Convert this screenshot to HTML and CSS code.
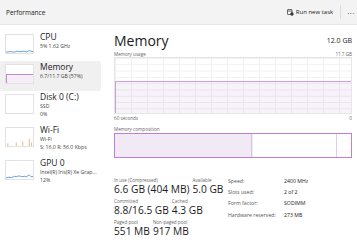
FILE: index.html
```html
<!DOCTYPE html>
<html lang="en">
<head>
<meta charset="UTF-8">
<title>Performance - Memory</title>
<link rel="stylesheet" href="styles.css">
</head>
<body>
<div class="topbar">
    <span class="app-title">Performance</span>
    <div class="top-actions">
        <span class="run-task">
            <svg width="7" height="7" viewBox="0 0 14 14">
                <rect x="1" y="1" width="9" height="10" rx="1" fill="none" stroke="#333" stroke-width="1.4"/>
                <line x1="1" y1="4" x2="10" y2="4" stroke="#333" stroke-width="1.4"/>
                <circle cx="10" cy="10" r="3.3" fill="#333"/>
            </svg>
            Run new task
        </span>
        <span class="sep"></span>
        <span class="more">&middot;&middot;&middot;</span>
    </div>
</div>

<div class="layout">
    <div class="sidebar">
        <div class="item">
            <div class="thumb">
                <svg viewBox="0 0 29 20" preserveAspectRatio="none">
                    <polyline points="0,19 5,18.5 9,19 12,18 15,18.6 19,18 22,18.8 25,17.5 29,18.5" fill="none" stroke="#2f7fd0" stroke-width="0.8"/>
                </svg>
            </div>
            <div class="info">
                <div class="name">CPU</div>
                <div class="sub">5% 1.62 GHz</div>
            </div>
        </div>
        <div class="item active">
            <div class="thumb">
                <div class="mem-fill"></div>
            </div>
            <div class="info">
                <div class="name">Memory</div>
                <div class="sub">6.7/11.7 GB (57%)</div>
            </div>
        </div>
        <div class="item">
            <div class="thumb"></div>
            <div class="info">
                <div class="name">Disk 0 (C:)</div>
                <div class="sub">SSD</div>
                <div class="sub">0%</div>
            </div>
        </div>
        <div class="item">
            <div class="thumb">
                <svg viewBox="0 0 29 20" preserveAspectRatio="none">
                    <g stroke="#e0a060" stroke-width="0.8">
                        <line x1="2" y1="20" x2="2" y2="17"/>
                        <line x1="11" y1="20" x2="11" y2="16"/>
                        <line x1="18" y1="20" x2="18" y2="15"/>
                        <line x1="25" y1="20" x2="25" y2="12"/>
                        <line x1="27.5" y1="20" x2="27.5" y2="16"/>
                    </g>
                </svg>
            </div>
            <div class="info">
                <div class="name">Wi-Fi</div>
                <div class="sub">Wi-Fi</div>
                <div class="sub">S: 16.0 R: 56.0 Kbps</div>
            </div>
        </div>
        <div class="item">
            <div class="thumb">
                <svg viewBox="0 0 29 20" preserveAspectRatio="none">
                    <polyline points="0,19 3,18 6,18.5 9,17 11,17.5 14,16.5 17,17.5 20,17 22,17.5 25,15.5 27,17.5 29,17" fill="none" stroke="#2f7fd0" stroke-width="0.8"/>
                </svg>
            </div>
            <div class="info">
                <div class="name">GPU 0</div>
                <div class="sub">Intel(R) Iris(R) Xe Grap...</div>
                <div class="sub">12%</div>
            </div>
        </div>
    </div>

    <div class="main">
        <div class="heading">
            <h1>Memory</h1>
            <span class="total">12.0 GB</span>
        </div>
        <div class="caption">
            <span>Memory usage</span>
            <span>11.7 GB</span>
        </div>
        <div class="graph">
            <div class="usage" style="height: 58%"></div>
        </div>
        <div class="caption">
            <span>60 seconds</span>
            <span>0</span>
        </div>
        <div class="caption comp-label">
            <span>Memory composition</span>
        </div>
        <div class="comp-bar">
            <div class="seg in-use" style="width: 57.5%"></div>
            <div class="seg modified"></div>
            <div class="seg standby"></div>
            <div class="seg free"></div>
        </div>

        <div class="details">
            <div class="stats">
                <div class="stat-row">
                    <div class="stat">
                        <div class="label">In use (Compressed)</div>
                        <div class="value">6.6 GB (404 MB)</div>
                    </div>
                    <div class="stat">
                        <div class="label">Available</div>
                        <div class="value">5.0 GB</div>
                    </div>
                </div>
                <div class="stat-row">
                    <div class="stat">
                        <div class="label">Committed</div>
                        <div class="value">8.8/16.5 GB</div>
                    </div>
                    <div class="stat">
                        <div class="label">Cached</div>
                        <div class="value">4.3 GB</div>
                    </div>
                </div>
                <div class="stat-row">
                    <div class="stat">
                        <div class="label">Paged pool</div>
                        <div class="value">551 MB</div>
                    </div>
                    <div class="stat">
                        <div class="label">Non-paged pool</div>
                        <div class="value">917 MB</div>
                    </div>
                </div>
            </div>
            <div class="props">
                <span class="key">Speed:</span><span>2400 MHz</span>
                <span class="key">Slots used:</span><span>2 of 2</span>
                <span class="key">Form factor:</span><span>SODIMM</span>
                <span class="key">Hardware reserved:</span><span>273 MB</span>
            </div>
        </div>
    </div>
</div>
</body>
</html>
```

FILE: styles.css
```css
* {
    margin: 0;
    padding: 0;
    box-sizing: border-box;
}
body {
    font-family: "Open Sans", "Noto Sans", sans-serif;
    color: #1b1b1b;
    background: #ffffff;
    width: 357px;
    height: 250px;
    overflow: hidden;
}
.topbar {
    height: 25px;
    background: #f3f3f3;
    border-bottom: 1px solid #e6e6e6;
    display: flex;
    align-items: center;
    justify-content: space-between;
    padding: 0 2px 0 6px;
}
.app-title {
    font-size: 6.5px;
}
.top-actions {
    display: flex;
    align-items: center;
    font-size: 6px;
}
.run-task {
    display: flex;
    align-items: center;
    gap: 2px;
}
.sep {
    width: 1px;
    height: 14px;
    background: #dcdcdc;
    margin: 0 6px 0 7px;
}
.more {
    font-size: 8px;
    letter-spacing: 0.5px;
}
.layout {
    display: flex;
}
.sidebar {
    width: 101px;
    padding-top: 6px;
}
.item {
    display: flex;
    gap: 6px;
    padding: 2px 5px 6.5px 5px;
    min-height: 30px;
}
.item.active {
    background: #f0f0f0;
    border-radius: 2px;
}
.thumb {
    width: 29px;
    height: 20px;
    flex-shrink: 0;
    border: 1px solid #e2e2e2;
    background: #ffffff;
    margin-top: 1px;
    display: flex;
    flex-direction: column;
    justify-content: flex-end;
}
.thumb svg {
    width: 100%;
    height: 100%;
    display: block;
}
.mem-fill {
    height: 52%;
    background: #f5eef8;
    border-top: 1px solid #c38ad6;
    border-left: 1px solid #c38ad6;
}
.info {
    line-height: 1;
    min-width: 0;
}
.name {
    font-size: 8.5px;
    margin-bottom: 2px;
}
.sub {
    font-size: 5.2px;
    color: #444;
    margin-top: 2.8px;
    white-space: nowrap;
}
.main {
    flex: 1;
    padding: 5px 5px 0 13px;
}
.heading {
    display: flex;
    justify-content: space-between;
    align-items: center;
    height: 20px;
}
h1 {
    font-size: 14px;
    font-weight: 400;
    padding-top: 1px;
}
.total {
    font-size: 7px;
}
.caption {
    display: flex;
    justify-content: space-between;
    font-size: 4.6px;
    color: #666;
    height: 7px;
    align-items: center;
}
.graph {
    height: 57px;
    border: 1px solid #e6e6e6;
    background-color: #ffffff;
    background-image:
        linear-gradient(to right, #f0f0f0 1px, transparent 1px),
        linear-gradient(to bottom, #f0f0f0 1px, transparent 1px);
    background-size: 16px 100%, 100% 6.3px;
    display: flex;
    flex-direction: column;
    justify-content: flex-end;
}
.usage {
    background: rgba(160, 100, 190, 0.08);
    border-top: 1px solid #cf9ce0;
    border-left: 1px solid #cf9ce0;
}
.comp-label {
    margin-top: 4px;
}
.comp-bar {
    height: 25px;
    margin-top: 1px;
    border: 1px solid #c17dd8;
    display: flex;
}
.seg {
    height: 100%;
}
.in-use {
    background: #f1e9f4;
}
.modified {
    width: 2px;
    border-left: 1px solid #d8c4df;
    background: #f1e9f4;
}
.standby {
    flex: 1;
    border-right: 1px solid #e1cce8;
}
.free {
    width: 14px;
}
.details {
    display: flex;
    margin-top: 19px;
}
.stats {
    width: 114px;
    flex-shrink: 0;
    display: flex;
    flex-direction: column;
    gap: 3px;
}
.stat-row {
    display: flex;
    gap: 3px;
}
.label {
    font-size: 4.6px;
    color: #666;
    line-height: 6px;
}
.value {
    font-size: 10.2px;
    line-height: 12px;
}
.props {
    display: grid;
    grid-template-columns: 56px auto;
    font-size: 5.2px;
    row-gap: 3.2px;
    align-content: start;
}
.key {
    color: #555;
}
```
